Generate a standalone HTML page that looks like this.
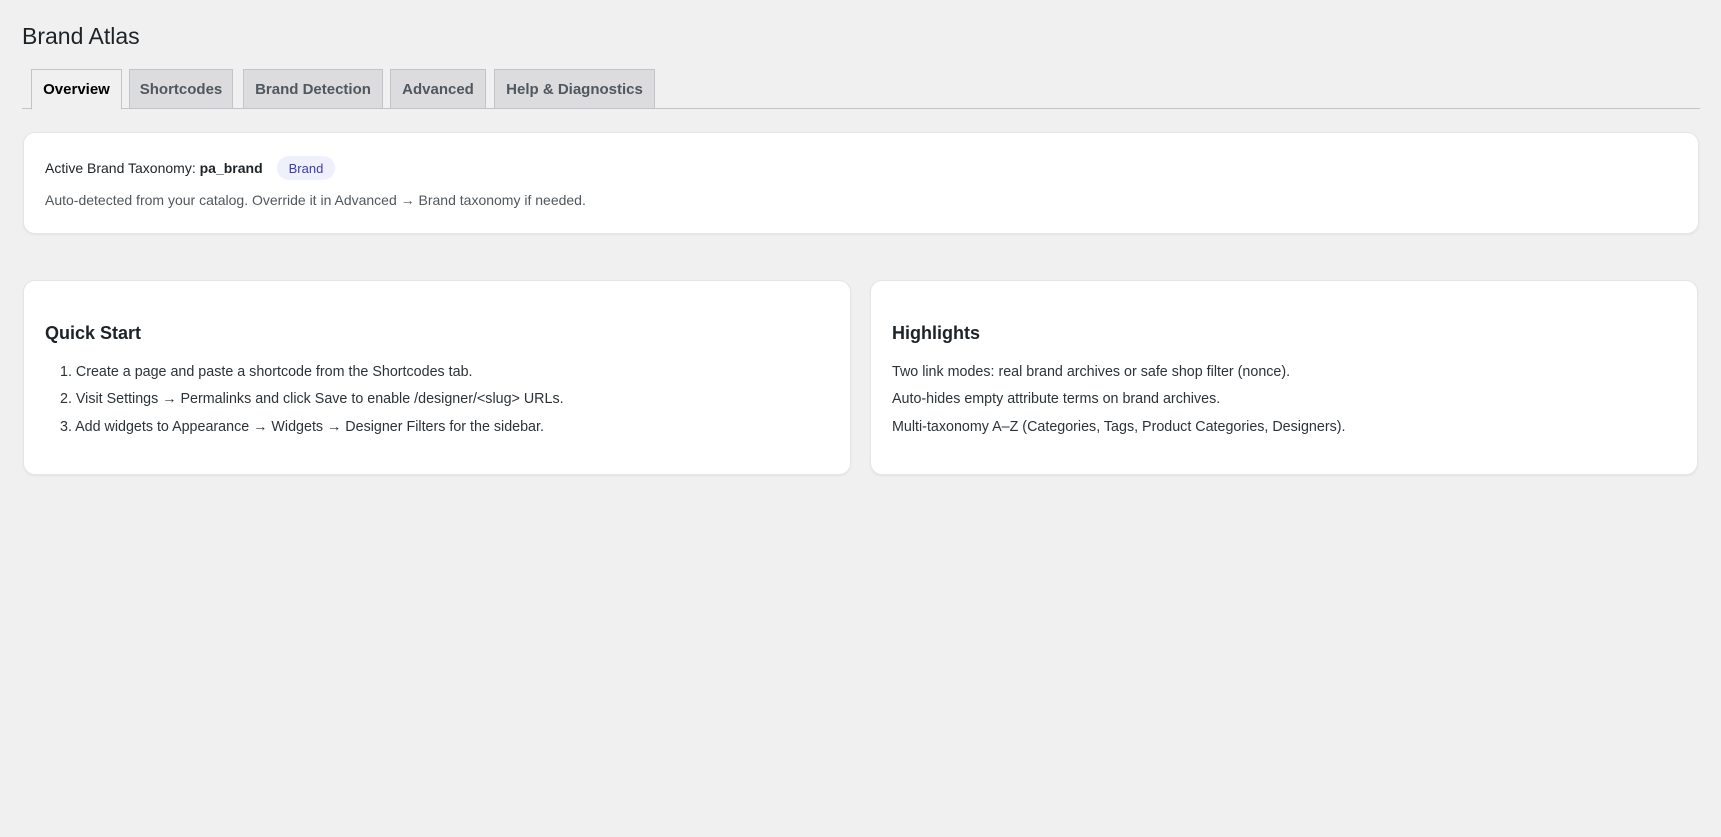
<!DOCTYPE html>
<html><head><meta charset="utf-8"><style>
*{box-sizing:border-box;margin:0;padding:0}
body{width:1721px;height:837px;background:#f0f0f1;font-family:"Liberation Sans",Arial,sans-serif;color:#1d2327;position:relative;overflow:hidden}
h1{position:absolute;left:22px;top:23px;font-size:23px;font-weight:400;color:#1d2327}
.tabs{position:absolute;left:22px;top:69px;width:1678px;height:40px;border-bottom:1px solid #c3c4c7}
.tab{position:absolute;top:0;height:40px;border:1px solid #c3c4c7;background:#dcdcde;font-size:15px;font-weight:700;color:#50575e;display:flex;align-items:center;justify-content:center}
.tab.on{background:#f0f0f1;color:#000;border-bottom-color:#f0f0f1;height:41px}
.card{position:absolute;background:#fff;border-radius:12px;box-shadow:0 1px 2px rgba(0,0,0,.06);border:1px solid #e6e6e8}
.t{position:absolute;font-size:14px;white-space:nowrap}
.badge{position:absolute;left:277px;top:156px;width:58px;height:24px;border-radius:12px;background:#eef0fc;color:#3b3bab;font-size:13px;display:flex;align-items:center;justify-content:center}
h2{position:absolute;font-size:18px;font-weight:700;color:#1d2327}
.li{position:absolute;font-size:14.3px;color:#2c3338;white-space:nowrap}
</style></head><body>
<h1>Brand Atlas</h1>
<div class="tabs">
<div class="tab on" style="left:9px;width:91px">Overview</div>
<div class="tab" style="left:107px;width:104px">Shortcodes</div>
<div class="tab" style="left:221px;width:140px">Brand Detection</div>
<div class="tab" style="left:368px;width:96px">Advanced</div>
<div class="tab" style="left:472px;width:161px">Help &amp; Diagnostics</div>
</div>
<div class="card" style="left:23px;top:132px;width:1676px;height:102px"></div>
<div class="t" style="left:45px;top:160px;color:#1d2327">Active Brand Taxonomy: <b>pa_brand</b></div>
<div class="badge">Brand</div>
<div class="t" style="left:45px;top:192px;color:#50575e">Auto-detected from your catalog. Override it in Advanced → Brand taxonomy if needed.</div>

<div class="card" style="left:23px;top:280px;width:828px;height:195px"></div>
<div class="card" style="left:870px;top:280px;width:828px;height:195px"></div>
<h2 style="left:45px;top:323px">Quick Start</h2>
<div class="li" style="left:60px;top:364px">1. Create a page and paste a shortcode from the Shortcodes tab.</div>
<div class="li" style="left:60px;top:391px">2. Visit Settings → Permalinks and click Save to enable /designer/&lt;slug&gt; URLs.</div>
<div class="li" style="left:60px;top:419px">3. Add widgets to Appearance → Widgets → Designer Filters for the sidebar.</div>
<h2 style="left:892px;top:323px">Highlights</h2>
<div class="li" style="left:892px;top:364px">Two link modes: real brand archives or safe shop filter (nonce).</div>
<div class="li" style="left:892px;top:391px">Auto-hides empty attribute terms on brand archives.</div>
<div class="li" style="left:892px;top:419px">Multi-taxonomy A–Z (Categories, Tags, Product Categories, Designers).</div>
</body></html>
